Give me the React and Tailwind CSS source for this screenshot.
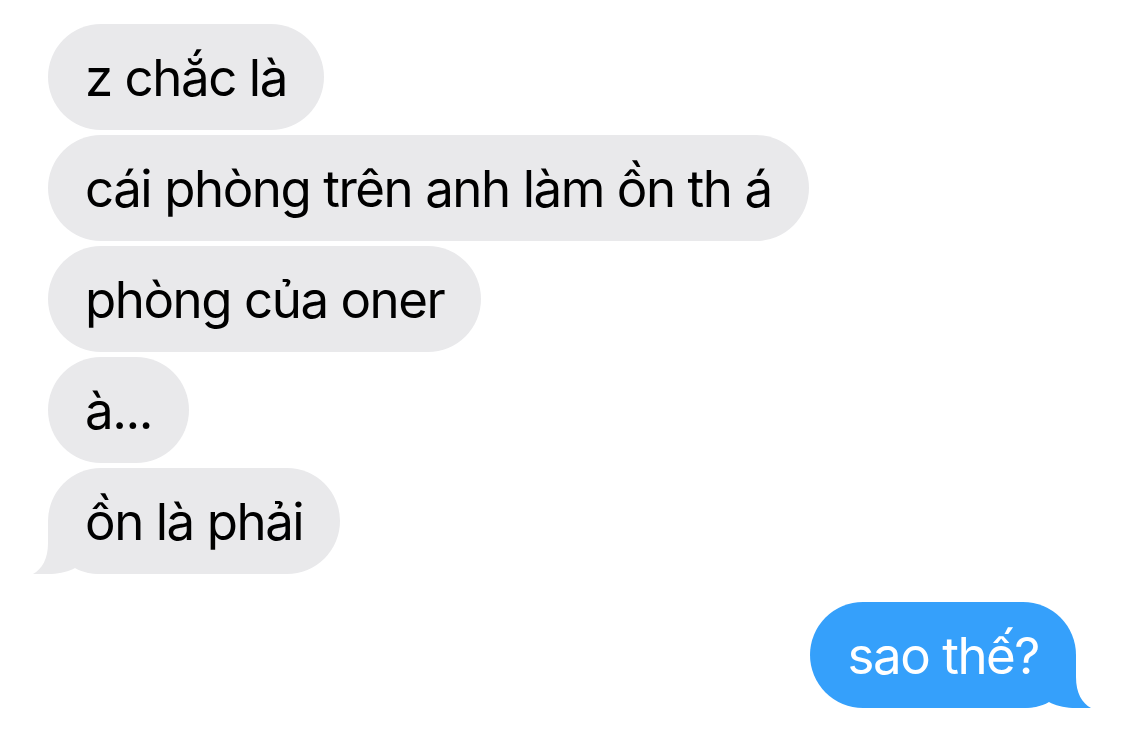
import React from "react";

const GREY = "#e9e9eb";
const BLUE = "#35a0fb";

function Tail({ color, flip }) {
  return (
    <svg
      width="70"
      height="53"
      viewBox="0 0 70 53"
      className={
        flip
          ? "absolute -right-[15px] bottom-0 -scale-x-100"
          : "absolute -left-[15px] bottom-0"
      }
    >
      <path
        d="M15 0 H70 V53 C60 53 50 52 42 47 C32 53 14 54 0 53 C9 48 15 38 15 22 Z"
        fill={color}
      />
    </svg>
  );
}

function Bubble({ text, tail, me }) {
  return (
    <div
      className={`relative h-[106px] flex items-center px-[37px] rounded-full text-[51px] leading-none tracking-[-1.45px] ${
        me ? "bg-[#35a0fb] text-white self-end" : "bg-[#e9e9eb] text-black self-start"
      }`}
    >
      {tail && <Tail color={me ? BLUE : GREY} flip={me} />}
      <span className="relative pt-[1px] pb-[1px]">{text}</span>
    </div>
  );
}

export default function App() {
  const msgs = ["z chắc là", "cái phòng trên anh làm ồn th á", "phòng của oner", "à...", "ồn là phải"];
  return (
    <div
      className="w-[1125px] h-[732px] bg-white overflow-hidden flex flex-col pt-[24px] pl-[48px] pr-[49px]"
      style={{ fontFamily: "Inter, 'Noto Sans', sans-serif" }}
    >
      <div className="flex flex-col gap-[5px]">
        {msgs.map((m, i) => (
          <Bubble key={i} text={m} tail={i === msgs.length - 1} />
        ))}
      </div>
      <div className="flex flex-col mt-[28px]">
        <Bubble text="sao thế?" me tail />
      </div>
    </div>
  );
}
